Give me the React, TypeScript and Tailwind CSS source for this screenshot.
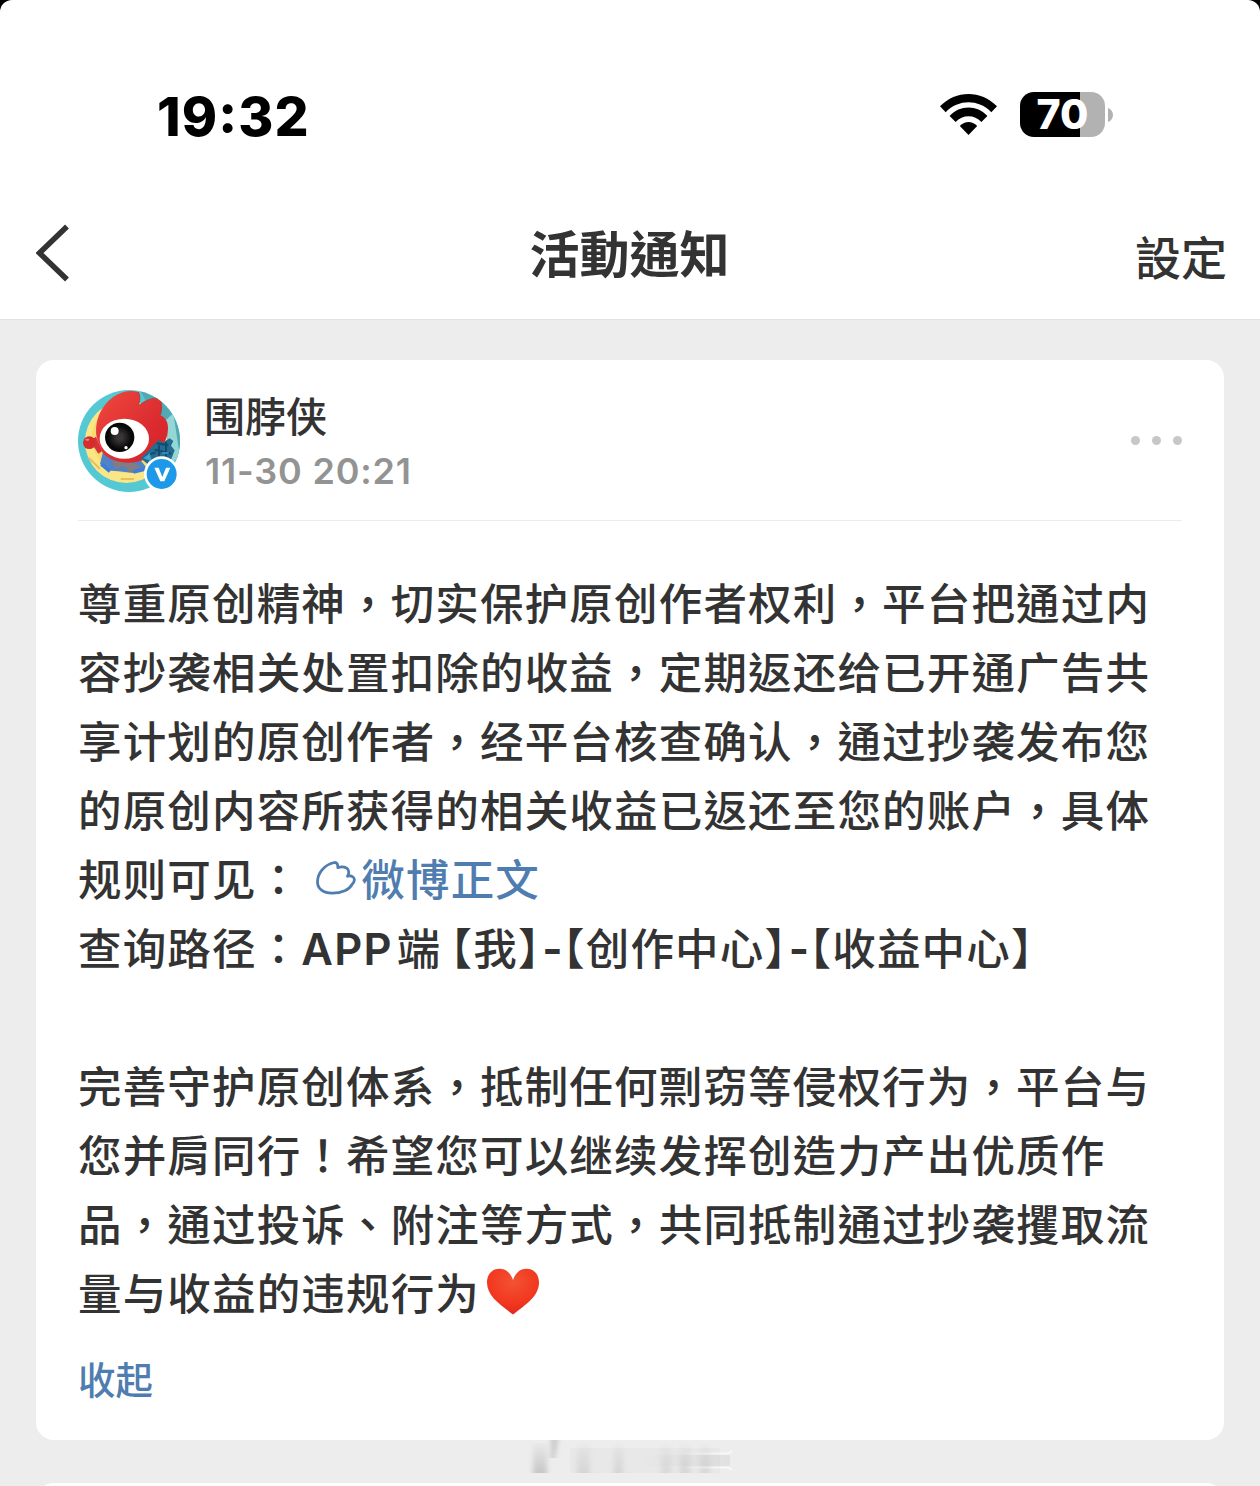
import type { ReactNode } from "react";

const StatusBar = () => (
	<div className="flex h-[186px] items-start justify-between pt-[88px] pr-[147px] pl-[157px]">
		<span className="font-['Inter',sans-serif] text-[53.500px] leading-[58px] font-extrabold tracking-[1.100px] text-black">
			19<span className="relative -top-[4px]">:</span>32
		</span>
		<div className="flex items-center pt-[4px]">
			<svg className="-mt-px" width="58" height="43" viewBox="0 0 58 43" fill="#000">
				<path d="M0 13.3 C16 -3.2 41 -3.2 57 13.3 L51.3 19.2 C38.500 6 18.500 6 5.7 19.2 Z" />
				<path d="M9.6 23 C20 11.8 37 11.8 47.4 23 L41.4 29 C34.500 21.200 22.500 21.200 15.600 29 Z" />
				<path d="M19.800 33 C25 27.600 32 27.600 37.200 33 L28.500 42 Z" />
			</svg>
			<div className="ml-[22px] flex h-[45px] w-[85px] items-center justify-center rounded-[14px] bg-[linear-gradient(to_right,#000_60px,#b2b2b2_60px)] font-['Inter',sans-serif] text-[41px] leading-none font-extrabold text-white">
				70
			</div>
			<svg className="ml-[3px]" width="5" height="14" viewBox="0 0 5 14">
				<path d="M0 0 C3 1 5 4 5 7 S3 13 0 14 Z" fill="#b2b2b2" />
			</svg>
		</div>
	</div>
);

const NavBar = () => (
	<div className="grid h-[133px] grid-cols-3 items-center pr-[33px] pl-9">
		<svg className="mt-px" width="34" height="58" viewBox="0 0 34 58" fill="none">
			<path d="M31 2.500 L3.500 29 L31 55.500" stroke="#333" strokeWidth="5.500" />
		</svg>
		<h1 className="-mt-[4px] -ml-[4px] text-center text-[50px] leading-[60px] font-bold">活動通知</h1>
		<span className="pt-[5px] text-right text-[46px] leading-[60px]">設定</span>
	</div>
);

const Avatar = () => (
	<svg className="shrink-0" width="102" height="102" viewBox="54 60 306 306">
		<defs>
			<clipPath id="avatarClip">
				<circle cx="207" cy="213" r="153" />
			</clipPath>
			<radialGradient id="eyeFill">
				<stop offset="0.2" stopColor="#3a3637" />
				<stop offset="0.8" stopColor="#080808" />
			</radialGradient>
			<linearGradient id="hairFill" x1="0" y1="0" x2="1" y2="1">
				<stop offset="0" stopColor="#ef4a40" />
				<stop offset="0.6" stopColor="#dc2c30" />
				<stop offset="1" stopColor="#d3222a" />
			</linearGradient>
		</defs>
		<g clipPath="url(#avatarClip)">
			<rect x="54" y="60" width="306" height="306" fill="#54c8d3" />
			<path d="M240 60 H360 V280 L310 190 Z" fill="#51a9b3" />
			<path d="M340 130 L360 260 L330 280 L318 150 Z" fill="#94d7d5" />
			<circle cx="199" cy="215" r="124" fill="#fae686" />
			<circle cx="199" cy="205" r="104" fill="#f8dc70" />
			<path d="M85 262 L120 297 M182 327 H222" stroke="#e6c05f" strokeWidth="6" />
			<path d="M128 250 L232 258 L262 296 L220 309 L176 304 L154 302 L120 282 Z" fill="#4f83c5" />
			<path d="M155 272 L214 274 L242 293 L208 307 L190 288 L168 297 Z" fill="#857b82" />
			<path d="M124 282 L150 304 M220 306 L260 296" stroke="#3c7cdd" strokeWidth="11" />
			<path
				d="M111 205 C100 153 126 98 171 74 C196 61 217 61 235 66 C242 80 240 91 235 107 C253 94 273 82 301 84 C306 101 306 122 301 136 C318 143 325 159 324 178 C322 221 294 249 256 267 C212 289 153 276 128 249 Z"
				fill="url(#hairFill)"
			/>
			<path d="M235 66 C242 80 240 91 235 107 C253 94 273 82 301 84 C306 101 306 122 301 136" fill="none" stroke="#a84542" strokeWidth="3" />
			<path d="M90 212 L108 200 L127 243 L115 251 Z" fill="#da3039" />
			<ellipse cx="193" cy="206" rx="74" ry="60" fill="#fff" />
			<circle cx="179" cy="202" r="44" fill="url(#eyeFill)" />
			<circle cx="164" cy="183" r="12" fill="#fff" />
			<circle cx="198" cy="233" r="5" fill="#fff" />
			<circle cx="88" cy="218" r="19" fill="#d52d2e" />
			<ellipse cx="82" cy="209" rx="6" ry="3" fill="#eb8b80" />
			<path d="M242 265 L272 234 L296 209 L307 218 L329 205 L340 213 L333 227 L344 241 L333 270 L294 275 L267 286 Z" fill="#236c92" />
			<path d="M258 257 L287 247 M290 220 L325 226 M284 239 L333 251 M297 226 V263 M318 216 V266" stroke="#154a6f" strokeWidth="6" />
			<path d="M254 264 L268 252 L273 271 Z M306 249 H326" fill="#45aad7" stroke="#3c9dcc" strokeWidth="4" />
		</g>
		<circle cx="305" cy="312" r="53" fill="#fff" />
		<circle cx="305" cy="312" r="45" fill="#1c99e8" />
		<path d="M283 293 H296 L307 321 L318 293 H331 L313 334 H301 Z" fill="#fff" />
	</svg>
);

const WeiboLinkIcon = () => (
	<svg className="mr-[5px] ml-[3px] inline-block align-[1px]" width="40" height="34" viewBox="0 0 40 34" fill="none">
		<path
			d="M18.500 1.500 C8.500 3.500 1.500 12 1.500 21 C1.500 28 7.500 32.200 16 32.200 C26 32.200 33.500 28.500 36 23.500 C39 20.500 39 17.500 37 16 C35.500 14.800 33 14.600 31.500 15.200 C33.500 12.500 33 8.500 30.500 7 C28 5.800 24.500 5.800 21.800 6.600 C22 3.500 21 1.300 18.500 1.500 Z"
			stroke="#507daf"
			strokeWidth="2.800"
			strokeLinejoin="round"
		/>
	</svg>
);

const Heart = () => (
	<svg className="ml-[6px] inline-block align-[-5px]" width="54" height="47" viewBox="0 0 54 47">
		<defs>
			<radialGradient id="heartFill" cx="0.5" cy="0.28" r="0.75">
				<stop offset="0" stopColor="#f25332" />
				<stop offset="0.65" stopColor="#f2371f" />
				<stop offset="1" stopColor="#df251d" />
			</radialGradient>
		</defs>
		<path
			d="M27 12 C24.500 4.500 19.500 .8 13.500 .8 C6 .8 1 6.500 1 14.500 C1 28 14 36.500 27 46.500 C40 36.500 53 28 53 14.500 C53 6.500 48 .8 40.500 .8 C34.500 .8 29.500 4.500 27 12 Z"
			fill="url(#heartFill)"
		/>
	</svg>
);

const Bracket = ({ children }: { children: ReactNode }) => (
	<span className="[font-feature-settings:'halt']">{children}</span>
);

const Dash = () => (
	<span className="inline-block w-[22px] pl-px text-center font-['Inter',sans-serif] font-bold tracking-normal">-</span>
);

const lines: ReactNode[] = [
	"尊重原创精神，切实保护原创作者权利，平台把通过内",
	"容抄袭相关处置扣除的收益，定期返还给已开通广告共",
	"享计划的原创作者，经平台核查确认，通过抄袭发布您",
	"的原创内容所获得的相关收益已返还至您的账户，具体",
	<>
		规则可见：
		<a className="ml-[12px] text-[#507daf]">
			<WeiboLinkIcon />
			微博正文
		</a>
	</>,
	<>
		查询路径：
		<span className="mr-[4px] font-['Inter',sans-serif] font-semibold">APP</span>
		<span className="mr-[9px]">端</span>
		<Bracket>【</Bracket>我<Bracket>】</Bracket>
		<Dash />
		<Bracket>【</Bracket>创作中心<Bracket>】</Bracket>
		<Dash />
		<Bracket>【</Bracket>收益中心<Bracket>】</Bracket>
	</>,
	"",
	"完善守护原创体系，抵制任何剽窃等侵权行为，平台与",
	"您并肩同行！希望您可以继续发挥创造力产出优质作",
	"品，通过投诉、附注等方式，共同抵制通过抄袭攫取流",
	<>
		量与收益的违规行为
		<Heart />
	</>,
];

// soft vertical streaks left between the two cards
const streaks = [
	{ x: 13, w: 14, o: 0.32 },
	{ x: 57, w: 13, o: 0.16 },
	{ x: 94, w: 9, o: 0.17 },
	{ x: 141, w: 10, o: 0.13 },
	{ x: 160, w: 10, o: 0.16 },
	{ x: 180, w: 10, o: 0.14 },
];

const Smudge = () => (
	<svg className="mx-auto block" width="220" height="43" viewBox="0 0 220 43">
		<defs>
			<linearGradient id="streak" x1="0" y1="0" x2="0" y2="1">
				<stop offset="0" stopColor="#777" stopOpacity="0.1" />
				<stop offset="1" stopColor="#777" />
			</linearGradient>
			<linearGradient id="glint" gradientUnits="userSpaceOnUse" x1="160" y1="0" x2="212" y2="0">
				<stop offset="0" stopColor="#fff" stopOpacity="0" />
				<stop offset="1" stopColor="#fff" />
			</linearGradient>
			<linearGradient id="shade" gradientUnits="userSpaceOnUse" x1="120" y1="0" x2="212" y2="0">
				<stop offset="0" stopColor="#999" stopOpacity="0" />
				<stop offset="1" stopColor="#999" />
			</linearGradient>
			<filter id="soft" x="-1" y="-0.2" width="3" height="1.4">
				<feGaussianBlur stdDeviation="2.500 0.3" />
			</filter>
		</defs>
		<rect x="50" y="8" width="150" height="25" fill="#999" opacity="0.05" />
		{streaks.map((s) => (
			<rect key={s.x} x={s.x} y="3" width={s.w} height="30" fill="url(#streak)" opacity={s.o} filter="url(#soft)" />
		))}
		<path d="M31 0 H38 L35 18 H31 Z" fill="#777" opacity="0.3" filter="url(#soft)" />
		<path d="M160 13.500 H208 L212 11 M160 27.500 H208 L212 30" stroke="url(#glint)" strokeWidth="2" fill="none" opacity="0.7" />
		<rect x="120" y="15" width="90" height="11" fill="url(#shade)" opacity="0.15" />
	</svg>
);

const App = () => {
	return (
		<div className="h-[1486px] w-[1260px] overflow-hidden bg-black font-['Noto_Sans_CJK_TC',sans-serif] font-medium text-[#333]">
			<header className="h-[320px] rounded-t-[12px] border-b border-[#e2e2e2] bg-white">
				<StatusBar />
				<NavBar />
			</header>
			<main className="h-[1166px] bg-[#ededed] px-9 pt-10">
				<article className="h-[1080px] rounded-[18px] bg-white px-[42px] pt-[30px]">
					<div className="flex h-[131px] items-start border-b border-[#ececec]">
						<Avatar />
						<div className="ml-[24px]">
							<div className="mt-[-3px] text-[41px] leading-[54px]">围脖侠</div>
							<div className="mt-[3px] ml-px font-['Inter',sans-serif] text-[36px] leading-[54px] font-semibold tracking-[0.8px] text-[#939393]">
								11-30 20:21
							</div>
						</div>
						<div className="mt-[46px] ml-auto flex gap-[12px]">
							{[0, 1, 2].map((i) => (
								<i key={i} className="size-[9px] rounded-full bg-[#c7c7c7]" />
							))}
						</div>
					</div>
					<div className="pt-[46px] text-[43.500px] leading-[69px] tracking-[1.170px] whitespace-nowrap">
						{lines.map((line, i) => (
							<p key={i} className="h-[69px]">
								{line}
							</p>
						))}
					</div>
					<button className="mt-[28px] block text-[37.500px] leading-[48px] text-[#507daf]">收起</button>
				</article>
				<Smudge />
				<div className="h-10 rounded-t-[18px] bg-white" />
			</main>
		</div>
	);
};

export default App;
